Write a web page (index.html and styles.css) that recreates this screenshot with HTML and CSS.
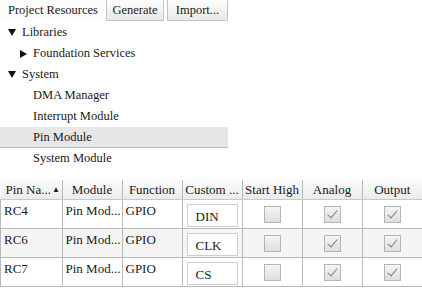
FILE: index.html
```html
<!DOCTYPE html>
<html lang="en">
<head>
    <meta charset="UTF-8">
    <title>Project Resources</title>
    <link rel="stylesheet" href="styles.css">
</head>
<body>
    <div class="toolbar">
        <span class="tab">Project Resources</span>
        <button class="btn">Generate</button>
        <button class="btn">Import...</button>
    </div>
    <ul class="tree">
        <li class="node"><span class="arrow down"></span>Libraries</li>
        <li class="node lvl2"><span class="arrow right"></span>Foundation Services</li>
        <li class="node"><span class="arrow down"></span>System</li>
        <li class="node leaf">DMA Manager</li>
        <li class="node leaf">Interrupt Module</li>
        <li class="node leaf selected">Pin Module</li>
        <li class="node leaf">System Module</li>
    </ul>
    <table class="pins">
        <thead>
            <tr>
                <th class="left">Pin Na...<span class="sort">&#9650;</span></th>
                <th>Module</th>
                <th>Function</th>
                <th>Custom ...</th>
                <th>Start High</th>
                <th>Analog</th>
                <th>Output</th>
            </tr>
        </thead>
        <tbody>
            <tr>
                <td>RC4</td><td>Pin Mod...</td><td>GPIO</td>
                <td><span class="field">DIN</span></td>
                <td class="c"><span class="box"></span></td>
                <td class="c"><span class="box on"></span></td>
                <td class="c"><span class="box on"></span></td>
            </tr>
            <tr class="alt">
                <td>RC6</td><td>Pin Mod...</td><td>GPIO</td>
                <td><span class="field">CLK</span></td>
                <td class="c"><span class="box"></span></td>
                <td class="c"><span class="box on"></span></td>
                <td class="c"><span class="box on"></span></td>
            </tr>
            <tr>
                <td>RC7</td><td>Pin Mod...</td><td>GPIO</td>
                <td><span class="field">CS</span></td>
                <td class="c"><span class="box"></span></td>
                <td class="c"><span class="box on"></span></td>
                <td class="c"><span class="box on"></span></td>
            </tr>
        </tbody>
    </table>
</body>
</html>
```

FILE: styles.css
```css
body { margin: 0; font-family: "Liberation Serif", "DejaVu Serif", serif; font-size: 12.5px; color: #1a1a1a; background: #fff; width: 422px; height: 290px; overflow: hidden; }
.toolbar { display: flex; align-items: stretch; height: 21px; }
.tab { display: flex; align-items: center; white-space: nowrap; box-sizing: border-box; width: 105px; padding-left: 8px; background: #fbfbfb; }
.btn { font: inherit; color: #1a1a1a; white-space: nowrap; box-sizing: border-box; height: 21px; padding: 0; border: 1px solid #c4c4c4; border-top: none; background: linear-gradient(#fdfdfd, #e9e9e9); }
.btn:nth-of-type(1) { width: 58px; margin-left: 1px; }
.btn:nth-of-type(2) { width: 61px; margin-left: 3px; }
.tree { list-style: none; margin: 1px 0 0; padding: 0; width: 228px; }
.node { display: flex; align-items: center; height: 21px; padding-left: 8px; }
.node.lvl2 { padding-left: 20px; }
.node.leaf { padding-left: 33px; }
.node.selected { background: #e7e7e7; border-bottom: 1px solid #bdbdbd; height: 20px; }
.arrow { width: 0; height: 0; }
.arrow.down { border-left: 4px solid transparent; border-right: 4px solid transparent; border-top: 7px solid #111; margin-right: 6px; }
.arrow.right { border-top: 4px solid transparent; border-bottom: 4px solid transparent; border-left: 7px solid #111; margin-right: 6px; }
.pins { border-collapse: collapse; margin-top: 11px; width: 422px; table-layout: fixed; font-size: 13px; }
.pins th { height: 19px; font-weight: normal; background: linear-gradient(#fbfbfb, #ebebeb); border-left: 1px solid #b8b8b8; border-bottom: 1px solid #c8c8c8; padding: 0; text-align: center; white-space: nowrap; }
.pins th.left { text-align: left; padding-left: 5px; border-left: none; }
.pins th.left, .pins td:first-child { width: 56px; }
.sort { font-size: 8px; margin-left: 1px; vertical-align: 2px; }
.pins tbody tr { height: 29px; }
.pins td { box-sizing: border-box; height: 29px; padding: 3px 3px 0; vertical-align: top; border-left: 1px solid #b8b8b8; border-bottom: 1px solid #b8b8b8; white-space: nowrap; overflow: hidden; }
.pins tr.alt td { background: #f5f5f5; }
.pins td.c { text-align: center; vertical-align: middle; padding: 0; }
.field { display: block; box-sizing: border-box; margin: 1px 0 0 1px; width: 51px; height: 23px; line-height: 23px; padding-left: 8px; background: #fff; border: 1px solid #cfcfcf; }
.box { display: inline-block; box-sizing: border-box; width: 17px; height: 17px; border: 1px solid #b5b5b5; background: linear-gradient(#f4f4f4, #dedede); vertical-align: middle; position: relative; }
.box.on::after { content: ""; position: absolute; left: 5px; top: 1px; width: 4px; height: 9px; border-right: 1.5px solid #808080; border-bottom: 1.5px solid #808080; transform: rotate(40deg); }
```
